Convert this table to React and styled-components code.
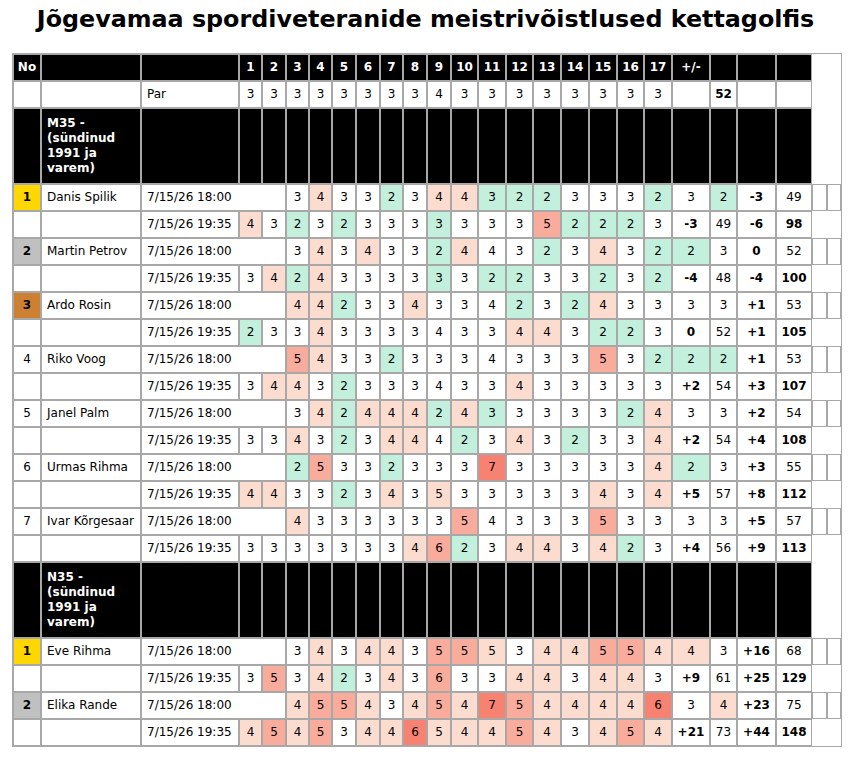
import styled, { createGlobalStyle } from "styled-components";

const GlobalStyle = createGlobalStyle`
  * { box-sizing: border-box; }
  body {
    margin: 0;
    background: #fff;
    color: #000;
    font-family: "DejaVu Sans", Verdana, sans-serif;
  }
`;

const LINE = "#a8a8a8";

const tones = {
  good: "#c3f0dd",
  bogey: "#fddcd0",
  double: "#f9ab9c",
  worse: "#f88272",
};

const medals = {
  1: "#ffd700",
  2: "#c0c0c0",
  3: "#cd7f32",
};

const Page = styled.div`
  padding-top: 5px;
  padding-bottom: 20px;
`;

const Title = styled.h1`
  margin: 0 0 20px;
  font-size: 23.8px;
  line-height: 28px;
  font-weight: bold;
  text-align: center;
`;

const Table = styled.table`
  width: 830px;
  margin-left: 12px;
  table-layout: fixed;
  border-collapse: separate;
  border-spacing: 0;
  border: 1px solid ${LINE};
  font-size: 12px;
`;

const HeadCell = styled.th`
  border: 1px solid ${LINE};
  padding: 5px 2px;
  line-height: 15px;
  background: #000;
  color: #fff;
  font-weight: bold;
  text-align: center;
  white-space: nowrap;
`;

const CategoryCell = styled.th`
  border: 1px solid ${LINE};
  padding: 7px 5px;
  line-height: 15px;
  background: #000;
  color: #fff;
  font-weight: bold;
  text-align: left;
  vertical-align: middle;
`;

const Cell = styled.td`
  border: 1px solid ${LINE};
  padding: 5px ${(p) => (p.$left ? "5px" : "2px")};
  line-height: 15px;
  text-align: ${(p) => (p.$left ? "left" : "center")};
  font-weight: ${(p) => (p.$bold ? "bold" : "normal")};
  background: ${(p) => (p.$tone ? tones[p.$tone] : "#fff")};
  white-space: nowrap;
  overflow: hidden;
`;

const RankCell = styled(Cell)`
  background: ${(p) => medals[p.$rank] || "#fff"};
  font-weight: ${(p) => (medals[p.$rank] ? "bold" : "normal")};
`;

const widths = [
  28, 100, 98,
  23, 24, 23, 23, 24, 24, 23, 24, 24,
  27, 28, 27, 28, 28, 28, 27, 28,
  38, 27, 39, 36, 15, 14,
];

const par = [3, 3, 3, 3, 3, 3, 3, 3, 4, 3, 3, 3, 3, 3, 3, 3, 3];
const parTotal = par.reduce((a, b) => a + b, 0);

const groups = [
  {
    title: "M35 - (sündinud 1991 ja varem)",
    players: [
      { name: "Danis Spilik", a: [3, 4, 3, 3, 2, 3, 4, 4, 3, 2, 2, 3, 3, 3, 2, 3, 2], b: [4, 3, 2, 3, 2, 3, 3, 3, 3, 3, 3, 3, 5, 2, 2, 2, 3] },
      { name: "Martin Petrov", a: [3, 4, 3, 4, 3, 3, 2, 4, 4, 3, 2, 3, 4, 3, 2, 2, 3], b: [3, 4, 2, 4, 3, 3, 3, 3, 3, 3, 2, 2, 3, 3, 2, 3, 2] },
      { name: "Ardo Rosin", a: [4, 4, 2, 3, 3, 4, 3, 3, 4, 2, 3, 2, 4, 3, 3, 3, 3], b: [2, 3, 3, 4, 3, 3, 3, 3, 4, 3, 3, 4, 4, 3, 2, 2, 3] },
      { name: "Riko Voog", a: [5, 4, 3, 3, 2, 3, 3, 3, 4, 3, 3, 3, 5, 3, 2, 2, 2], b: [3, 4, 4, 3, 2, 3, 3, 3, 4, 3, 3, 4, 3, 3, 3, 3, 3] },
      { name: "Janel Palm", a: [3, 4, 2, 4, 4, 4, 2, 4, 3, 3, 3, 3, 3, 2, 4, 3, 3], b: [3, 3, 4, 3, 2, 3, 4, 4, 4, 2, 3, 4, 3, 2, 3, 3, 4] },
      { name: "Urmas Rihma", a: [2, 5, 3, 3, 2, 3, 3, 3, 7, 3, 3, 3, 3, 3, 4, 2, 3], b: [4, 4, 3, 3, 2, 3, 4, 3, 5, 3, 3, 3, 3, 3, 4, 3, 4] },
      { name: "Ivar Kõrgesaar", a: [4, 3, 3, 3, 3, 3, 3, 5, 4, 3, 3, 3, 5, 3, 3, 3, 3], b: [3, 3, 3, 3, 3, 3, 3, 4, 6, 2, 3, 4, 4, 3, 4, 2, 3] },
    ],
  },
  {
    title: "N35 - (sündinud 1991 ja varem)",
    players: [
      { name: "Eve Rihma", a: [3, 4, 3, 4, 4, 3, 5, 5, 5, 3, 4, 4, 5, 5, 4, 4, 3], b: [3, 5, 3, 4, 2, 3, 4, 3, 6, 3, 3, 4, 4, 3, 4, 4, 3] },
      { name: "Elika Rande", a: [4, 5, 5, 4, 3, 4, 5, 4, 7, 5, 4, 4, 4, 4, 6, 3, 4], b: [4, 5, 4, 5, 3, 4, 4, 6, 5, 4, 4, 5, 4, 3, 4, 5, 4] },
    ],
  },
];

const sum = (list) => list.reduce((a, b) => a + b, 0);
const signed = (n) => (n > 0 ? `+${n}` : `${n}`);

const toneFor = (score, hole) => {
  const d = score - par[hole];
  if (d < 0) return "good";
  if (d === 1) return "bogey";
  if (d === 2) return "double";
  if (d >= 3) return "worse";
  return undefined;
};

const Scores = ({ list }) =>
  list.map((s, i) => (
    <Cell key={i} $tone={toneFor(s, i)}>
      {s}
    </Cell>
  ));

const PlayerRows = ({ rank, player }) => {
  const first = sum(player.a);
  const second = sum(player.b);
  const overall = first + second;
  return (
    <>
      <tr>
        <RankCell $rank={rank}>{rank}</RankCell>
        <Cell $left>{player.name}</Cell>
        <Cell $left colSpan={3}>7/15/26 18:00</Cell>
        <Scores list={player.a} />
        <Cell $bold>{signed(first - parTotal)}</Cell>
        <Cell>{first}</Cell>
        <Cell />
        <Cell />
      </tr>
      <tr>
        <Cell />
        <Cell />
        <Cell $left>7/15/26 19:35</Cell>
        <Scores list={player.b} />
        <Cell $bold>{signed(second - parTotal)}</Cell>
        <Cell>{second}</Cell>
        <Cell $bold>{signed(overall - parTotal * 2)}</Cell>
        <Cell $bold>{overall}</Cell>
      </tr>
    </>
  );
};

const CategoryRow = ({ title }) => (
  <tr>
    <HeadCell />
    <CategoryCell>{title}</CategoryCell>
    {Array.from({ length: 22 }, (_, i) => (
      <HeadCell key={i} />
    ))}
  </tr>
);

export default function App() {
  return (
    <Page>
      <GlobalStyle />
      <Title>Jõgevamaa spordiveteranide meistrivõistlused kettagolfis</Title>
      <Table>
        <colgroup>
          {widths.map((w, i) => (
            <col key={i} style={{ width: w }} />
          ))}
        </colgroup>
        <tbody>
          <tr>
            <HeadCell>No</HeadCell>
            <HeadCell />
            <HeadCell />
            {par.map((_, i) => (
              <HeadCell key={i}>{i + 1}</HeadCell>
            ))}
            <HeadCell>+/-</HeadCell>
            <HeadCell />
            <HeadCell />
            <HeadCell />
          </tr>
          <tr>
            <Cell />
            <Cell />
            <Cell $left>Par</Cell>
            {par.map((p, i) => (
              <Cell key={i}>{p}</Cell>
            ))}
            <Cell />
            <Cell $bold>{parTotal}</Cell>
            <Cell />
            <Cell />
          </tr>
          {groups.map((g) => (
            <>
              <CategoryRow key={g.title} title={g.title} />
              {g.players.map((p, i) => (
                <PlayerRows key={p.name} rank={i + 1} player={p} />
              ))}
            </>
          ))}
        </tbody>
      </Table>
    </Page>
  );
}
